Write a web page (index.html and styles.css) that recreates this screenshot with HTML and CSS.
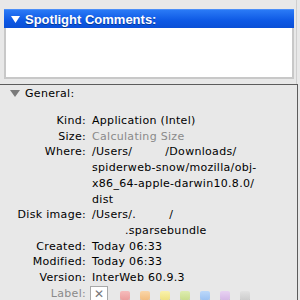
FILE: index.html
```html
<!DOCTYPE html>
<html>
<head>
<meta charset="utf-8">
<link rel="stylesheet" href="styles.css">
</head>
<body>
<div class="window">
  <section class="top">
    <div class="comments">
      <div class="comments-head">
        <svg class="tri" width="9" height="7" viewBox="0 0 9 7"><polygon points="0,0 9,0 4.5,7" fill="#fff"/></svg>
        <span>Spotlight Comments:</span>
      </div>
      <div class="comments-body"></div>
    </div>
  </section>
  <section class="general">
    <div class="general-head">
      <svg class="tri" width="10" height="7" viewBox="0 0 10 7"><polygon points="0,0 10,0 5,7" fill="#7a7a7a"/></svg>
      <span>General:</span>
    </div>
    <div class="info">
      <div class="k">Kind:</div><div class="v">Application (Intel)</div>
      <div class="k">Size:</div><div class="v dim">Calculating Size</div>
      <div class="k">Where:</div>
      <div class="v">/Users/<span class="gap-a"></span>/Downloads/<br>spiderweb-snow/mozilla/obj-<br>x86_64-apple-darwin10.8.0/<br>dist</div>
      <div class="k">Disk image:</div>
      <div class="v">/Users/.<span class="gap-b"></span>/<br><span class="indent">.sparsebundle</span></div>
      <div class="k">Created:</div><div class="v">Today 06:33</div>
      <div class="k">Modified:</div><div class="v">Today 06:33</div>
      <div class="k">Version:</div><div class="v">InterWeb 60.9.3</div>
      <div class="k dim">Label:</div>
      <div class="v labels">
        <span class="none">&#x2715;</span>
        <span class="sw red"></span>
        <span class="sw orange"></span>
        <span class="sw yellow"></span>
        <span class="sw green"></span>
        <span class="sw blue"></span>
        <span class="sw purple"></span>
        <span class="sw gray"></span>
      </div>
    </div>
  </section>
</div>
</body>
</html>
```
FILE: styles.css
```css
html, body {
  margin: 0;
  padding: 0;
  background: #e8e8e8;
  overflow: hidden;
}
.window {
  width: 300px;
  height: 300px;
  font-family: "DejaVu Sans", sans-serif;
  font-size: 11px;
  letter-spacing: 0.3px;
  color: #000;
}
.top {
  width: 297px;
  height: 84px;
  box-sizing: border-box;
  padding: 9px 3px 0 4px;
  border-right: 1px solid #cfcfcf;
}
.comments {
  width: 290px;
}
.comments-head {
  height: 19px;
  background: linear-gradient(#2a7af6, #0d58e4 60%, #0a4fd6);
  border-top: 1px solid #4a8ef8;
  box-sizing: border-box;
  display: flex;
  align-items: center;
  padding-left: 7px;
  gap: 5px;
  color: #fff;
  font-family: "Liberation Sans", sans-serif;
  font-weight: bold;
  font-size: 13px;
  letter-spacing: 0;
  text-shadow: 0 1px 0 rgba(0,0,0,0.35);
}
.comments-head .tri {
  margin-top: 1px;
}
.comments-body {
  height: 51px;
  background: #fff;
  border: 2px solid #c8c8c8;
  border-top: 0;
  box-sizing: border-box;
}
.general {
  width: 298px;
  height: 216px;
  box-sizing: border-box;
  border-top: 1px solid #5c5c5c;
  border-right: 1px solid #5c5c5c;
}
.general-head {
  display: flex;
  align-items: center;
  gap: 5px;
  padding: 0 0 0 10px;
  height: 16px;
}
.info {
  display: grid;
  grid-template-columns: 86px auto;
  column-gap: 6px;
  line-height: 15.7px;
  margin-top: 12px;
}
.k {
  text-align: right;
  white-space: nowrap;
}
.v {
  white-space: nowrap;
}
.dim {
  color: #8a8a8a;
}
.gap-a {
  display: inline-block;
  width: 33px;
}
.gap-b {
  display: inline-block;
  width: 33px;
}
.indent {
  padding-left: 33px;
}
.labels {
  display: flex;
  align-items: flex-start;
  height: 17px;
}
.none {
  width: 18px;
  height: 17px;
  box-sizing: border-box;
  border: 1px solid #a8a8a8;
  border-bottom: 0;
  background: #fff;
  color: #777;
  font-size: 12px;
  line-height: 15px;
  text-align: center;
  margin-left: -2px;
  margin-right: 12px;
  letter-spacing: 0;
}
.sw {
  width: 10px;
  height: 9px;
  margin-top: 5px;
  margin-right: 10px;
  border-radius: 2px;
  box-shadow: 0 1px 0 rgba(0,0,0,0.22);
}
.red { background: linear-gradient(#f6bcbc, #eb9e9e); }
.orange { background: linear-gradient(#fad6a8, #f2bd80); }
.yellow { background: linear-gradient(#faf2ac, #efe282); }
.green { background: linear-gradient(#deedb0, #c9dd8e); }
.blue { background: linear-gradient(#bcd8fa, #9cc2f2); }
.purple { background: linear-gradient(#e8d2f2, #d6b8e6); }
.gray { background: linear-gradient(#e2e2e2, #cdcdcd); }
```
